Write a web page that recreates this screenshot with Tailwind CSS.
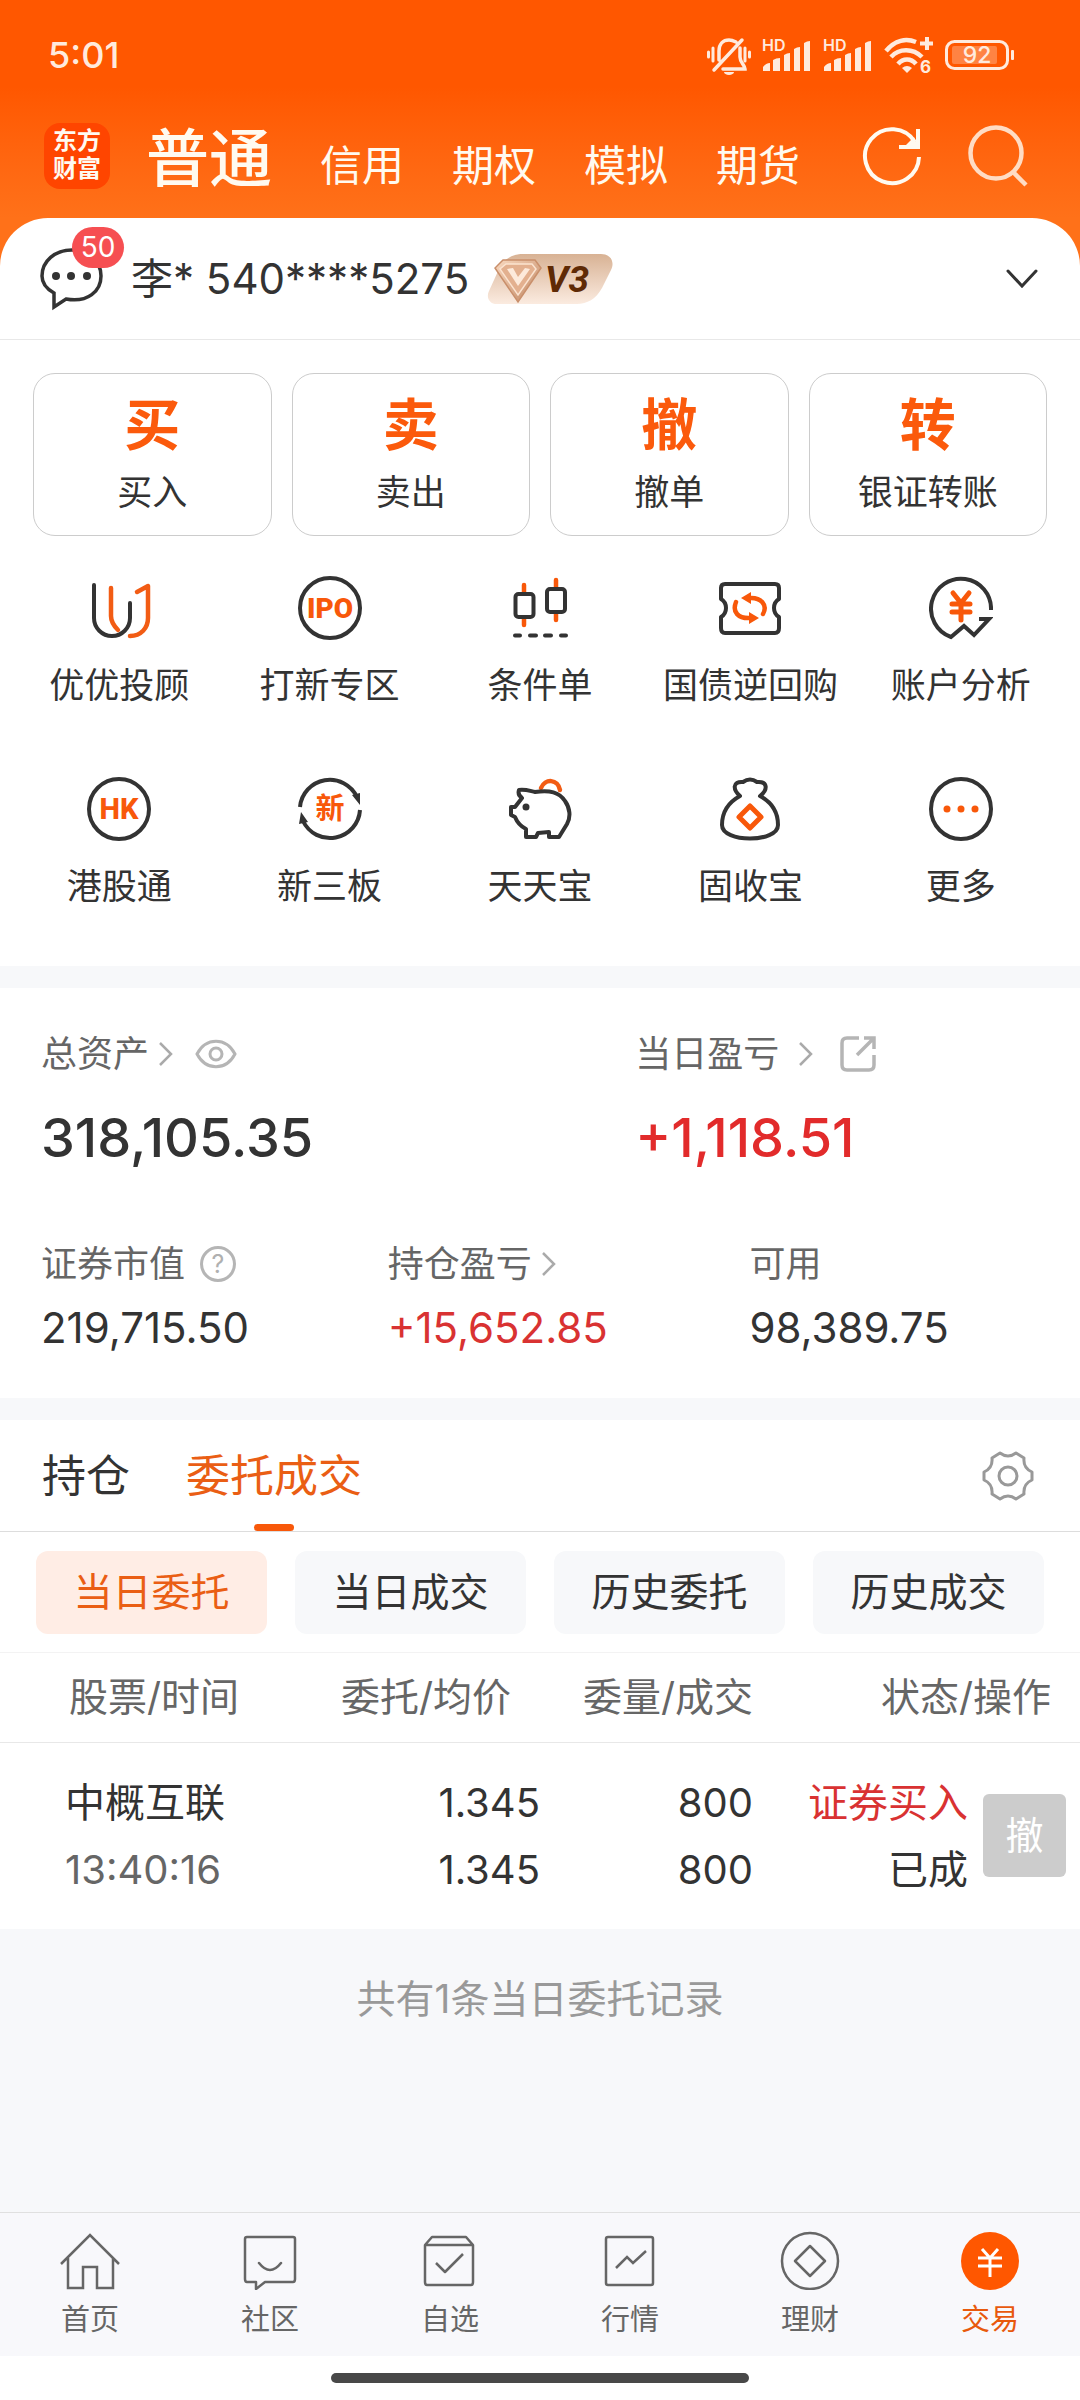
<!DOCTYPE html>
<html lang='zh-CN'>
<head>
  <meta charset='UTF-8'>
  <meta name='viewport' content='width=device-width, initial-scale=1.0'>
  <title>交易</title>
  <script src="https://cdn.jsdelivr.net/npm/@tailwindcss/browser@4"></script>
</head>
<body class="min-h-screen flex flex-col bg-[#f7f8fa] text-[#333] font-['Inter','Noto_Sans_CJK_SC',sans-serif]">

<header class='bg-linear-to-b from-[#ff5700] from-40% to-[#ff7119]'>
  <!-- status bar -->
  <div class='h-[110px] pl-12 pr-[65px] flex items-center justify-between text-[#ffeadd]'>
    <time class='text-4xl font-medium'>5:01</time>
    <div class='flex items-center gap-[11px]'>
      <svg class='w-11 h-10' viewBox='0 0 44 40' fill='none' stroke='currentColor' stroke-width='3.500' stroke-linecap='round'>
        <path d='M7 35L35 5M12 25V16C12 9 16 5 22 5c3 0 5 1 7 2M33 13v9c0 6 5 8 5 12H16'/>
        <path d='M1.500 17v5M6 13v13M38 13v13M42.500 17v5' stroke-width='3'/>
        <path d='M17 37h10a5 3 0 0 1-10 0z' fill='currentColor' stroke='none'/>
      </svg>
      <svg class='w-[50px] h-10' viewBox='0 0 50 40' fill='currentColor'>
        <text x='0' y='16' font-size='16' font-weight='600'>HD</text>
        <path d='M1 36v-4q3-4 7-4v8zM11 36V25q3-2 7-2v13zM22 36V20q3-2 6-2v18zM32 36V14q3-2 6-2v24zM42 36V8q3-2 6-2v30z'/>
      </svg>
      <svg class='w-[50px] h-10' viewBox='0 0 50 40' fill='currentColor'>
        <text x='0' y='16' font-size='16' font-weight='600'>HD</text>
        <path d='M1 36v-4q3-4 7-4v8zM11 36V25q3-2 7-2v13zM22 36V20q3-2 6-2v18zM32 36V14q3-2 6-2v24zM42 36V8q3-2 6-2v30z'/>
      </svg>
      <svg class='w-[50px] h-11' viewBox='0 -2 50 44' fill='none' stroke='currentColor' stroke-width='4.500'>
        <path d='M2 16C11 5 22 3 32 7M7 22c8-9 22-9 31 0M14 29c5-6 13-6 18 0'/>
        <path d='M18 33q5-4 10 0l-5 5z' fill='currentColor' stroke='none'/>
        <path d='M43 2v13M36 8.500h13' stroke-width='4'/>
        <text x='36' y='38' font-size='17' font-weight='700' fill='currentColor' stroke='none'>6</text>
      </svg>
      <svg class='w-[70px] h-[30px]' viewBox='0 0 70 30'>
        <rect x='1.500' y='1.500' width='61' height='27' rx='8' fill='none' stroke='currentColor' stroke-width='3'/>
        <rect x='7' y='6' width='45' height='18' rx='2' fill='currentColor' opacity='.3'/>
        <rect x='66' y='10' width='3' height='10' rx='1' fill='currentColor'/>
        <text x='32' y='23' font-size='23' font-weight='500' text-anchor='middle' fill='currentColor'>92</text>
      </svg>
    </div>
  </div>

  <div class='h-[108px] pl-11 pr-[52px] flex items-start justify-between text-[#fffaf0]'>
    <div class='flex items-start gap-9'>
      <div class='w-[66px] h-[66px] mt-[13px] pt-1 rounded-2xl bg-[#ff4500] text-center text-2xl leading-[28px] font-bold'>东方<br>财富</div>
      <nav class='mt-2 flex items-baseline gap-12 text-[42px] leading-[80px] whitespace-nowrap'>
        <a href='#' class='text-[63px] font-medium'>普通</a>
        <a href='#'>信用</a>
        <a href='#'>期权</a>
        <a href='#'>模拟</a>
        <a href='#'>期货</a>
      </nav>
    </div>
    <div class='mt-[14px] flex gap-10'>
      <button aria-label='刷新'>
        <svg class='w-16 h-16' viewBox='0 0 64 64' fill='none' stroke='currentColor' stroke-width='4'>
          <path d='M59 33A27 27 0 1 1 55 18'/>
          <path d='M39 23h19V5'/><path d='M58 23L45 22l9-9z' fill='currentColor' stroke='none'/>
        </svg>
      </button>
      <button aria-label='搜索'>
        <svg class='w-16 h-16 text-[#ffdcc4]' viewBox='0 0 64 64' fill='none' stroke='currentColor' stroke-width='4.500'>
          <circle cx='32' cy='29' r='25.500'/>
          <path d='M49 48L62 61'/>
        </svg>
      </button>
    </div>
  </div>
</header>

<!-- account row, rounded over the header colour -->
<div class='bg-[#ff7119]'>
  <div class='h-[122px] pl-10 pr-[42px] flex items-center border-b border-[#e8e8e8] bg-white rounded-t-[48px]'>
    <button class='relative' aria-label='消息'>
      <svg class='w-16 h-16' viewBox='0 0 64 64'>
        <path d='M14 60V46C5 41 2 35 2 29 2 14 15 3 32 3S61 14 61 29 48 56 26 52z' fill='none' stroke='#333' stroke-width='3.500'/>
        <g fill='#333'><circle cx='16' cy='29' r='4'/><circle cx='31' cy='29' r='4'/><circle cx='47' cy='29' r='4'/></g>
      </svg>
      <span class='absolute -top-5 left-8 w-[52px] h-[41px] rounded-full bg-[#f64f52] text-white text-[28px] leading-[41px] text-center'>50</span>
    </button>
    <span class='ml-[27px] text-[42px] whitespace-nowrap'>李* 540****5275</span>
    <svg class='ml-[18px] w-32 h-[52px] shrink-0' viewBox='0 0 128 52'>
      <defs>
        <linearGradient id='badge' x2='0' y2='1'><stop stop-color='#d8b294'/><stop offset='1' stop-color='#fbebe0'/></linearGradient>
        <linearGradient id='gem' x2='1' y2='1'><stop stop-color='#f9d9c0'/><stop offset='1' stop-color='#c08560'/></linearGradient>
      </defs>
      <path d='M36 1h78c10 0 14 8 10 16l-9 18C109 46 100 51 90 51H10C2 51-1 44 2 38l10-22C16 6 26 1 36 1z' fill='url(#badge)'/>
      <path d='M16 7h32l6 8-23 34L8 15z' fill='url(#gem)' stroke='#c98f6b' stroke-width='1.500'/>
      <path d='M19 11h26l4 5-18 26-18-26z' fill='#e3b08f' stroke='#fbe3d0' stroke-width='1.500'/>
      <path d='M20 16l6-1 5 9 7-9 5 1-12 17z' fill='#fdeadb'/>
      <text x='58' y='39' font-size='37' font-weight='700' font-style='italic' font-family='Roboto' fill='#5f2a05'>V3</text>
    </svg>
    <button class='ml-auto' aria-label='展开账户'>
      <svg class='w-8 h-5' viewBox='0 0 32 20' fill='none' stroke='#333' stroke-width='3' stroke-linecap='round'><path d='M2 2l14 15L30 2'/></svg>
    </button>
  </div>
</div>

<main class='grow flex flex-col'>
  <section class='pt-[33px] pb-[55px] bg-white'>
    <div class='px-[33px] grid grid-cols-4 gap-5'>
      <button class='h-[163px] pt-1 border border-[#ccc] rounded-[22px] text-[35px]'>
        <b class='block text-[56px] leading-[70px] text-[#fb5a0c]'>买</b><span class='block leading-[64px]'>买入</span>
      </button>
      <button class='h-[163px] pt-1 border border-[#ccc] rounded-[22px] text-[35px]'>
        <b class='block text-[56px] leading-[70px] text-[#fb5a0c]'>卖</b><span class='block leading-[64px]'>卖出</span>
      </button>
      <button class='h-[163px] pt-1 border border-[#ccc] rounded-[22px] text-[35px]'>
        <b class='block text-[56px] leading-[70px] text-[#fb5a0c]'>撤</b><span class='block leading-[64px]'>撤单</span>
      </button>
      <button class='h-[163px] pt-1 border border-[#ccc] rounded-[22px] text-[35px]'>
        <b class='block text-[56px] leading-[70px] text-[#fb5a0c]'>转</b><span class='block leading-[64px]'>银证转账</span>
      </button>
    </div>

    <div class='mt-10 px-[14px] grid grid-cols-5 gap-y-[67px] text-[35px] leading-[50px] whitespace-nowrap'>
      <a href='#' class='flex flex-col items-center gap-5'>
        <svg class='w-16 h-16' viewBox='0 0 64 64' fill='none' stroke='#333' stroke-width='4' stroke-linecap='round' stroke-linejoin='round'>
          <path d='M7 9v33a18 18 0 0 0 36 0V27'/>
          <path d='M24 12v28c0 6 3 10 7 14M50 16l11-6v32c0 10-7 18-18 18' stroke='#f25c14' stroke-width='4.500'/>
        </svg>优优投顾
      </a>
      <a href='#' class='flex flex-col items-center gap-5'>
        <svg class='w-16 h-16' viewBox='0 0 64 64'>
          <circle cx='32' cy='32' r='30' fill='none' stroke='#333' stroke-width='4'/>
          <text x='32' y='42' font-size='28' font-weight='900' font-family='Roboto' text-anchor='middle' fill='#f8580a'>IPO</text>
        </svg>打新专区
      </a>
      <a href='#' class='flex flex-col items-center gap-5'>
        <svg class='w-16 h-16' viewBox='0 0 64 64' fill='none' stroke='#333' stroke-width='4' stroke-linecap='round'>
          <path d='M16 9v8M16 42v7M48 4v7M48 37v7' stroke='#f8580a' stroke-width='4.500'/>
          <rect x='7.500' y='18' width='18' height='23' rx='3'/><rect x='39' y='13' width='18' height='23' rx='3'/>
          <path d='M7 59.500h5M22 59.500h6M37 59.500h6M53 59.500h5'/>
        </svg>条件单
      </a>
      <a href='#' class='flex flex-col items-center gap-5'>
        <svg class='w-16 h-16' viewBox='0 0 64 64' fill='none' stroke='#333' stroke-width='4' stroke-linejoin='round'>
          <path d='M7 8h50q4 0 4 4v11q-5 3-5 9t5 9v11q0 5-4 5H7q-4 0-4-5V41q5-3 5-9t-5-9V12q0-4 4-4z'/>
          <g stroke='#f8580a' stroke-width='4.500' stroke-linecap='round'><path d='M31 22c12-1 19 7 14 16M33 42c-13 1-19-6-15-16'/></g>
          <path d='M23 22l10-6v12zM41 42l-10-6v12z' fill='#f8580a' stroke='none'/>
        </svg>国债逆回购
      </a>
      <a href='#' class='flex flex-col items-center gap-5'>
        <svg class='w-16 h-16' viewBox='0 0 64 64' fill='none' stroke='#333' stroke-width='4'>
          <path d='M62 34A30 30 0 1 0 22 61L35 50l10 9L60 43H50'/>
          <path d='M24 17l8 10 8-10M32 27v17M23 28h18M23 36h18' stroke='#f8580a' stroke-width='5' stroke-linecap='round'/>
        </svg>账户分析
      </a>
      <a href='#' class='flex flex-col items-center gap-5'>
        <svg class='w-16 h-16' viewBox='0 0 64 64'>
          <circle cx='32' cy='32' r='30' fill='none' stroke='#333' stroke-width='4'/>
          <text x='32' y='42' font-size='29' font-weight='800' font-family='Roboto' text-anchor='middle' fill='#f8580a'>HK</text>
        </svg>港股通
      </a>
      <a href='#' class='flex flex-col items-center gap-5'>
        <svg class='w-16 h-16' viewBox='0 0 64 64'>
          <path d='M2 30A30 30 0 0 1 59 20M62 33A30 30 0 0 1 5 44' fill='none' stroke='#333' stroke-width='4'/>
          <path d='M54 18l8-2 0 12zM10 45l-9 2 2-12z' fill='#333'/>
          <text x='32' y='42' font-size='29' font-weight='700' text-anchor='middle' fill='#f8580a'>新</text>
        </svg>新三板
      </a>
      <a href='#' class='flex flex-col items-center gap-5'>
        <svg class='w-16 h-16' viewBox='0 0 64 64' fill='none' stroke='#333' stroke-width='4' stroke-linejoin='round'>
          <path d='M33 11C37 1 50 2 52 13' stroke='#f25c14' stroke-width='4.500' stroke-linecap='round'/>
          <path d='M14 21C11 19 10 16 11 13c6-1 11 1 16 2 15-2 24 0 30 9 5 7 6 16 2 23l-8 13H41v-5l-11 1-2 4H18v-8C12 49 9 45 7 40l-4-2v-8h4z'/>
          <circle cx='18' cy='30' r='3.500' fill='#333' stroke='none'/>
        </svg>天天宝
      </a>
      <a href='#' class='flex flex-col items-center gap-5'>
        <svg class='w-16 h-16' viewBox='0 0 64 64' fill='none' stroke='#333' stroke-width='4' stroke-linejoin='round'>
          <path d='M22 19C15 13 14 4 25 5q7-5 14 0c11-1 11 8 3 14 11 6 18 15 18 29 0 18-56 18-56 0 0-14 7-23 18-29z'/>
          <path d='M32 29l11 11-11 11-11-11z' stroke='#f8580a' stroke-width='5'/>
        </svg>固收宝
      </a>
      <a href='#' class='flex flex-col items-center gap-5'>
        <svg class='w-16 h-16' viewBox='0 0 64 64'>
          <circle cx='32' cy='32' r='30' fill='none' stroke='#333' stroke-width='4'/>
          <g fill='#f8580a'><circle cx='18' cy='32' r='3.500'/><circle cx='32' cy='32' r='3.500'/><circle cx='46' cy='32' r='3.500'/></g>
        </svg>更多
      </a>
    </div>
  </section>

  <!-- assets -->
  <section class='mt-[22px] pt-[39px] pb-[45px] px-[41px] bg-white text-4xl text-[#666] whitespace-nowrap'>
    <div class='grid grid-cols-[593fr_403fr]'>
      <div>
        <div class='flex items-center leading-[54px]'>
          总资产
          <svg class='ml-[10px] w-[14px] h-6' viewBox='0 0 14 24' fill='none' stroke='#aaa' stroke-width='2.500'><path d='M1 1l11 11L1 23'/></svg>
          <button class='ml-[22px]' aria-label='隐藏金额'>
            <svg class='w-[42px] h-8' viewBox='0 0 42 32' fill='none' stroke='#b5b5b5' stroke-width='3'><path d='M2 16C11-1 31-1 40 16 31 33 11 33 2 16z'/><circle cx='21' cy='16' r='6'/></svg>
          </button>
        </div>
        <div class='mt-6 text-[54px] leading-[66px] font-medium text-[#333]'>318,105.35</div>
      </div>
      <div>
        <div class='flex items-center leading-[54px]'>
          当日盈亏
          <svg class='ml-[20px] w-[14px] h-6' viewBox='0 0 14 24' fill='none' stroke='#aaa' stroke-width='2.500'><path d='M1 1l11 11L1 23'/></svg>
          <button class='ml-[27px]' aria-label='分享'>
            <svg class='w-9 h-9' viewBox='0 0 36 36' fill='none' stroke='#b5b5b5' stroke-width='3.500'><path d='M19 2H7Q2 2 2 7v22q0 5 5 5h22q5 0 5-5V19M24 2h10v11M34 2L17 19'/></svg>
          </button>
        </div>
        <div class='mt-6 text-[54px] leading-[66px] font-medium text-[#e22b2b]'>+1,118.51</div>
      </div>
    </div>
    <div class='mt-[66px] grid grid-cols-[346fr_361fr_289fr]'>
      <div>
        <div class='flex items-center leading-[54px]'>
          证券市值
          <svg class='ml-[15px] w-9 h-9' viewBox='0 0 36 36'>
            <circle cx='18' cy='18' r='16.500' fill='none' stroke='#b5b5b5' stroke-width='3'/>
            <text x='18' y='27' font-size='25' text-anchor='middle' fill='#b0b0b0'>?</text>
          </svg>
        </div>
        <div class='mt-3 text-[42px] leading-[50px] text-[#333]'>219,715.50</div>
      </div>
      <div>
        <div class='flex items-center leading-[54px]'>
          持仓盈亏
          <svg class='ml-[10px] w-[14px] h-6' viewBox='0 0 14 24' fill='none' stroke='#aaa' stroke-width='2.500'><path d='M1 1l11 11L1 23'/></svg>
        </div>
        <div class='mt-3 text-[42px] leading-[50px] text-[#d93232]'>+15,652.85</div>
      </div>
      <div>
        <div class='leading-[54px]'>可用</div>
        <div class='mt-3 text-[42px] leading-[50px] text-[#333]'>98,389.75</div>
      </div>
    </div>
  </section>

  <!-- orders -->
  <section class='mt-[22px] bg-white whitespace-nowrap'>
    <div class='h-28 pl-[42px] pr-[46px] flex items-center justify-between border-b border-[#ddd] text-[44px]'>
      <div class='h-full flex gap-14 leading-[108px]'>
        <button>持仓</button>
        <button class='relative text-[#ea5e14]'>委托成交<span class='absolute bottom-0 left-1/2 -translate-x-1/2 w-10 h-[7px] rounded-full bg-[#f8580a]'></span></button>
      </div>
      <button aria-label='设置'>
        <svg class='w-[52px] h-[52px]' viewBox='0 0 52 52' fill='none' stroke='#999' stroke-width='3' stroke-linejoin='round'>
          <path d='M18 3q8 6 16 0l8 5q-1 10 8 14v8q-9 4-8 14l-8 5q-8-6-16 0l-8-5q1-10-8-14v-8q9-4 8-14z'/><circle cx='26' cy='26' r='9'/>
        </svg>
      </button>
    </div>
    <div class='h-[121px] px-9 flex items-center gap-7 border-b border-[#f3f3f3] text-[39px]'>
      <button class='grow basis-0 h-[83px] rounded-xl bg-[#ffede5] text-[#ea5e14]'>当日委托</button>
      <button class='grow basis-0 h-[83px] rounded-xl bg-[#f7f8fa]'>当日成交</button>
      <button class='grow basis-0 h-[83px] rounded-xl bg-[#f7f8fa]'>历史委托</button>
      <button class='grow basis-0 h-[83px] rounded-xl bg-[#f7f8fa]'>历史成交</button>
    </div>
    <table class='w-full table-fixed text-right'>
      <colgroup>
        <col class='w-[28%]'><col class='w-[22%]'><col class='w-[20%]'><col class='w-[20%]'><col class='w-[10%]'>
      </colgroup>
      <thead>
        <tr class='h-[89px] border-b border-[#e8e8e8] text-[39px] text-[#666] *:font-normal'>
          <th class='pl-[69px] text-left'>股票/时间</th>
          <th class='pr-[29px]'>委托/均价</th>
          <th class='pr-[3px]'>委量/成交</th>
          <th class='pr-[29px]' colspan='2'>状态/操作</th>
        </tr>
      </thead>
      <tbody>
        <tr class='h-[187px] text-[40px] leading-[67px]'>
          <td class='pl-[65px] text-left'>中概互联<br><span class='text-[#666]'>13:40:16</span></td>
          <td>1.345<br>1.345</td>
          <td class='pr-[3px]'>800<br>800</td>
          <td class='pr-1'><span class='text-[#d93232]'>证券买入</span><br>已成</td>
          <td class='pr-[14px]'><button class='w-[83px] h-[83px] rounded-md bg-[#ccc] text-white text-[38px] leading-[83px] align-middle'>撤</button></td>
        </tr>
      </tbody>
    </table>
  </section>
  <p class='pt-10 text-center text-[39px] leading-[60px] text-[#999]'>共有1条当日委托记录</p>
</main>

<nav class='h-36 pt-[13px] grid grid-cols-6 border-t border-[#e0e0e0] bg-[#f8f8fb] text-[29px] leading-[44px] text-[#666]'>
  <a href='#' class='flex flex-col items-center gap-2'>
    <svg class='w-16 h-16' viewBox='0 0 64 64' fill='none' stroke='currentColor' stroke-width='2.500'><path d='M3 38L32 9l29 29M10 32v30h15V41h14v21h16V32'/></svg>首页
  </a>
  <a href='#' class='flex flex-col items-center gap-2'>
    <svg class='w-16 h-16' viewBox='0 0 64 64' fill='none' stroke='currentColor' stroke-width='2.500' stroke-linejoin='round' stroke-linecap='round'><path d='M9 11h46q2 0 2 2v40q0 3-2 3H27l-9 7v-7H9q-2 0-2-3V13q0-2 2-2zM21 37q11 14 22 0'/></svg>社区
  </a>
  <a href='#' class='flex flex-col items-center gap-2'>
    <svg class='w-16 h-16' viewBox='0 0 64 64' fill='none' stroke='currentColor' stroke-width='2.500' stroke-linejoin='round'><path d='M7 19l7-8h34l7 8v37q0 3-2 3H9q-2 0-2-3zM7 19h48M18 37l9 9 18-18'/></svg>自选
  </a>
  <a href='#' class='flex flex-col items-center gap-2'>
    <svg class='w-16 h-16' viewBox='0 0 64 64' fill='none' stroke='currentColor' stroke-width='2.500'><rect x='8' y='11' width='47' height='48' rx='2'/><path d='M18 42l11-11 6 6 13-12'/></svg>行情
  </a>
  <a href='#' class='flex flex-col items-center gap-2'>
    <svg class='w-16 h-16' viewBox='0 0 64 64' fill='none' stroke='currentColor' stroke-width='2.500' stroke-linejoin='round'><circle cx='32' cy='35' r='28'/><path d='M32 20l15 15-15 15-15-15z'/></svg>理财
  </a>
  <a href='#' class='flex flex-col items-center gap-2 text-[#e8590c]'>
    <svg class='w-16 h-16' viewBox='0 0 64 64' fill='none' stroke='#fff' stroke-width='3'><circle cx='32' cy='35' r='29' fill='#ff5700' stroke='none'/><path d='M24 23l8 9 8-9M32 32v19M20 32h24M20 40h24'/></svg>交易
  </a>
</nav>
<div class='h-11 pt-[17px] bg-white'>
  <div class='mx-auto w-[418px] h-[10px] rounded-full bg-[#484848]'></div>
</div>

</body>
</html>
